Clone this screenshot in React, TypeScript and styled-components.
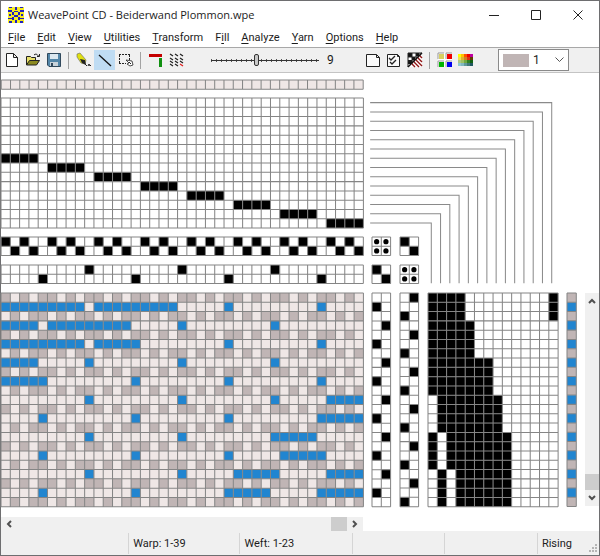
import React from "react";
import styled, { createGlobalStyle, css } from "styled-components";

const GlobalStyle = createGlobalStyle`
  * { box-sizing: border-box; }
  body { margin: 0; background: #fff; }
  button, select, input { font: inherit; color: inherit; margin: 0; padding: 0; border: 0; background: none; }
  svg { display: block; }
`;

const PALE = "#efe7e6";
const GREY = "#c0b5b5";
const BLUE = "#2185d0";

/* ---------- window frame ---------- */

const Window = styled.div`
  display: flex;
  flex-direction: column;
  min-height: 100vh;
  border: 1px solid #6e6e70;
  background: #fff;
  color: #1c1c1c;
  font-family: Roboto, "Open Sans", sans-serif;
  font-size: 11px;
`;

const TitleBar = styled.header`
  display: flex;
  align-items: center;
  height: 27px;
  padding-left: 7px;
`;

const Title = styled.h1`
  flex: 1;
  margin: 0 0 0 4px;
  font-family: "Open Sans", sans-serif;
  font-size: 11px;
  font-weight: 400;
  white-space: nowrap;
`;

const CaptionButton = styled.button`
  display: grid;
  place-items: center;
  width: 42px;
  height: 27px;
`;

const MenuBar = styled.nav`
  display: flex;
  align-items: center;
  gap: 12px;
  height: 19px;
  padding-left: 7px;
`;

const MenuButton = styled.button`
  line-height: 19px;
  white-space: nowrap;
  u { text-underline-offset: 2px; }
`;

/* ---------- toolbar ---------- */

const Toolbar = styled.div`
  display: flex;
  align-items: center;
  height: 26px;
  padding-right: 30px;
  background: #f0f0f0;
  border-top: 1px solid #a8a8a8;
  border-bottom: 1px solid #c4c4c4;
`;

const ToolButton = styled.button<{ $active?: boolean }>`
  display: grid;
  place-items: center;
  width: 21px;
  height: 20px;
  background: ${(p) => (p.$active ? "#bfdcf3" : "transparent")};
`;

const Divider = styled.span`
  width: 1px;
  height: 17px;
  margin: 0 4px;
  background: #a3a3a3;
`;

const Spacer = styled.span`
  flex: 1;
`;

const ZoomSlider = styled.input`
  appearance: none;
  width: 108px;
  height: 14px;
  margin-left: 24px;
  background:
    linear-gradient(#333, #333) center / 100% 1px no-repeat,
    repeating-linear-gradient(90deg, #555 0 1px, transparent 1px 5px) center / 100% 3px no-repeat;
  &::-webkit-slider-thumb {
    appearance: none;
    width: 5px;
    height: 12px;
    border: 1px solid #333;
    border-radius: 2px;
    background: #c8c8c8;
  }
`;

const ZoomValue = styled.output`
  width: 24px;
  margin-left: 8px;
  font-size: 12px;
`;

const YarnPicker = styled.label`
  display: flex;
  align-items: center;
  width: 71px;
  height: 22px;
  margin-left: 22px;
  padding: 0 4px;
  border: 1px solid #8a8a8a;
  background: #fff;
  font-size: 12px;
`;

const Swatch = styled.span`
  width: 26px;
  height: 13px;
  background: ${GREY};
`;

const YarnSelect = styled.select`
  flex: 1;
  min-width: 0;
  appearance: none;
  padding-left: 4px;
`;

/* ---------- draft ---------- */

const draftColumns = css`
  display: grid;
  grid-template-columns: 39fr 2fr 2fr 14fr 1fr;
  gap: 9px;
`;

const Workspace = styled.main`
  display: flex;
  gap: 9px;
  padding-top: 7px;
`;

const Draft = styled.div`
  ${draftColumns}
  flex: 1;
`;

const ScrollRow = styled.div`
  ${draftColumns}
  padding: 11px 23px 0 0;
`;

const Panel = styled.svg<{ $area: string }>`
  grid-area: ${(p) => p.$area};
  width: 100%;
  overflow: visible;
`;

const SideColumn = styled.div`
  display: flex;
  flex-direction: column;
  justify-content: flex-end;
  width: 14px;
`;

const ScrollTrack = styled.div<{ $vertical?: boolean }>`
  display: flex;
  flex-direction: ${(p) => (p.$vertical ? "column" : "row")};
  height: ${(p) => (p.$vertical ? "50%" : "14px")};
  background: #f0f0f0;
`;

const ScrollArrow = styled.button`
  display: grid;
  place-items: center;
  min-width: 14px;
  height: 16px;
`;

const HScrollArrow = styled(ScrollArrow)`
  width: 16px;
  height: 14px;
`;

const ScrollThumb = styled.div`
  width: 14px;
  height: 16px;
  background: #cdcdcd;
`;

const HScrollThumb = styled(ScrollThumb)`
  width: 16px;
  height: 14px;
`;

const StatusBar = styled.footer`
  flex: 1;
  display: grid;
  grid-template-columns: 127fr 111fr 112fr 92fr 93fr 62fr;
  min-height: 22px;
  padding: 2px 0 1px;
  background: #f0f0f0;
`;

const StatusCell = styled.span`
  display: flex;
  align-items: center;
  padding-left: 4px;
  white-space: nowrap;
  & + & { border-left: 1px solid #d5d5d5; }
`;

const ResizeGrip = styled.svg`
  align-self: flex-end;
  margin-left: auto;
`;

/* ---------- draft data ---------- */

type Paint = (row: number, col: number) => string | null;
type Span = [number, number];

const inSpans = (spans: Span[], n: number) => spans.some(([a, b]) => n >= a && n <= b);

const threading: Paint = (r, c) => (c % 5 < 4 && r === 6 + Math.floor(c / 5) ? "#000" : null);
const groundThreading: Paint = (r, c) => (c % 5 < 4 && c % 5 % 2 === r ? "#000" : null);
const tieThreading: Paint = (r, c) => (c % 10 === (r === 0 ? 9 : 4) ? "#000" : null);
const diagonal: Paint = (r, c) => (r === c ? "#000" : null);
const empty: Paint = () => null;
const tieTreadling: Paint = (r, c) => (r % 4 === (c === 0 ? 1 : 3) ? "#000" : null);
const groundTreadling: Paint = (r, c) => (r % 4 === (c === 0 ? 2 : 0) ? "#000" : null);

const treadlingSpans = (r: number): Span[] => {
  if (r < 3) return [[0, 3], [13, 13]];
  if (r < 7) return [[0, 4]];
  if (r < 11) return [[0, 6]];
  if (r < 15) return [[1, 7]];
  if (r < 19) return [[0, 0], [2, 8]];
  return [[1, 1], [3, 8]];
};
const treadling: Paint = (r, c) => (inSpans(treadlingSpans(r), c) ? "#000" : null);

const patternWeft: Record<number, Span[]> = {
  1: [[0, 8], [10, 18], [24, 24], [34, 34]],
  3: [[0, 3], [5, 13], [19, 19], [29, 29]],
  5: [[0, 8], [10, 14], [24, 24], [34, 34]],
  7: [[0, 3], [9, 9], [19, 19], [29, 29]],
  9: [[0, 4], [14, 14], [24, 24], [34, 34]],
  11: [[9, 9], [19, 19], [29, 29], [35, 38]],
  13: [[4, 4], [14, 14], [24, 24], [34, 38]],
  15: [[9, 9], [19, 19], [29, 33]],
  17: [[4, 4], [14, 14], [24, 24], [30, 34]],
  19: [[9, 9], [19, 19], [25, 29], [35, 38]],
  21: [[4, 4], [14, 14], [24, 28], [34, 38]],
};

const drawdown: Paint = (r, c) => {
  if (r % 2 === 1) return inSpans(patternWeft[r], c) ? BLUE : PALE;
  const raised = r % 4 === 0 ? [0, 2, 4] : [1, 3, 4];
  return raised.includes(c % 5) ? GREY : PALE;
};

interface GridProps {
  rows: number;
  cols: number;
  area: string;
  paint: Paint;
  label: string;
  dots?: boolean;
}

function WeaveGrid({ rows, cols, area, paint, label, dots }: GridProps) {
  const cells: React.ReactNode[] = [];
  for (let r = 0; r < rows; r++) {
    for (let c = 0; c < cols; c++) {
      const fill = paint(r, c);
      if (fill) cells.push(<rect key={`${r}-${c}`} x={c * 10} y={r * 10} width={10} height={10} fill={fill} />);
      if (dots) cells.push(<circle key={`d${r}-${c}`} cx={c * 10 + 5} cy={r * 10 + 5} r={2.8} />);
    }
  }
  let lines = "";
  for (let r = 0; r <= rows; r++) lines += `M0 ${r * 10}H${cols * 10}`;
  for (let c = 0; c <= cols; c++) lines += `M${c * 10} 0V${rows * 10}`;
  return (
    <Panel $area={area} viewBox={`0 0 ${cols * 10} ${rows * 10}`} role="img" aria-label={label}>
      {cells}
      <path d={lines} fill="none" stroke="#858585" strokeWidth={1.1} />
    </Panel>
  );
}

function HarnessLines() {
  const d = Array.from({ length: 14 }, (_, i) => `M-2 ${i * 10 + 5}H${194 - i * 10}V200`).join("");
  return (
    <Panel $area="2 / 2 / 5 / 5" viewBox="0 0 200 200" role="img" aria-label="Shaft to treadle lines">
      <path d={d} fill="none" stroke="#8a8a8a" strokeWidth={1.1} />
    </Panel>
  );
}

/* ---------- icons ---------- */

const Arrow = ({ d }: { d: string }) => (
  <svg width="10" height="10" viewBox="0 0 10 10" fill="none" stroke="#505050" strokeWidth="2">
    <path d={d} />
  </svg>
);

const AppIcon = () => (
  <svg width="16" height="16" viewBox="0 0 16 16" shapeRendering="crispEdges">
    <rect width="16" height="16" fill="#f4ec21" />
    <path
      d="M1 0h3v1h-3zM7 0h2v3h-2zM12 0h3v1h-3zM0 3h4v2h-4zM6 4h4v1h-4zM12 3h4v2h-4zM4 5h2v3h-2zM10 5h2v3h-2zM1 7h2v2h-2zM6 8h4v2h-4zM13 7h2v2h-2zM0 11h4v1h-4zM12 11h4v1h-4zM4 10h2v3h-2zM10 10h2v3h-2zM1 14h3v2h-3zM7 13h2v3h-2zM12 14h3v2h-3z"
      fill="#2020c0"
    />
  </svg>
);

const NewIcon = () => (
  <svg width="14" height="16" viewBox="0 0 14 16" fill="#fff" stroke="#222">
    <path d="M1.500 1.500H8.500L12.500 5.500V14.500H1.500ZM8.500 1.500V5.500H12.500" />
  </svg>
);

const OpenIcon = () => (
  <svg width="16" height="16" viewBox="0 0 16 16" stroke="#222" fill="none">
    <path d="M1.500 13V4.500H5.500L6.500 5.500H10.500V8" fill="#e8e06a" />
    <path d="M1.500 13L4.500 8.500H14.500L11.500 13Z" fill="#8b8a20" />
    <path d="M9 3C10.500 1.500 12 2 13.500 4M14.500 2V4.500H12" />
  </svg>
);

const SaveIcon = () => (
  <svg width="16" height="16" viewBox="0 0 16 16">
    <path d="M1.500 1.500H14.500V14.500H3L1.500 13Z" fill="#5386a8" stroke="#31495c" />
    <path d="M4 2H12V7H4Z" fill="#dce8ef" />
    <path d="M4 10H12V14H4Z" fill="#c9d3da" />
    <path d="M5 11H7V14H5Z" fill="#31495c" />
  </svg>
);

const PenIcon = () => (
  <svg width="17" height="16" viewBox="0 0 17 16">
    <path d="M2 2L5 1L11 8L10 12L6 11L2 5Z" fill="#e0e010" stroke="#666" strokeWidth=".6" />
    <path d="M5 7L10 8L11 13L7 11Z" fill="#222" />
    <path d="M9 11L12 14M13 14L14 12L15 14L16 13" stroke="#222" fill="none" />
  </svg>
);

const LineIcon = () => (
  <svg width="16" height="16" viewBox="0 0 16 16">
    <path d="M2 3L14 14" stroke="#111" strokeWidth="1.300" />
  </svg>
);

const SelectIcon = () => (
  <svg width="16" height="16" viewBox="0 0 16 16" fill="none" stroke="#222">
    <path d="M1 2.500H12M1 11.500H8M1.500 3V11M11.500 3V8" strokeDasharray="2 1" />
    <path d="M8 8L14 9L15 13L12 14L9 12L11 11Z" fill="#fff" strokeWidth=".8" />
    <path d="M11 10L13 12" />
  </svg>
);

const TieIcon = () => (
  <svg width="16" height="16" viewBox="0 0 16 16">
    <path d="M1 2H14V5H1Z" fill="#c40000" />
    <path d="M11 6H14V15H11Z" fill="#109010" />
  </svg>
);

const TwillIcon = () => (
  <svg width="16" height="16" viewBox="0 0 16 16" fill="none" strokeWidth="1.300">
    <path
      d="M1 2L4 4M6 2L9 4M11 2L14 4M1 6L4 8M6 6L9 8M11 6L14 8M1 9L4 11M6 9L9 11M11 9L14 11M1 12L4 14M6 12L9 14"
      stroke="#222"
    />
    <path d="M11 12L14 14" stroke="#e02020" />
  </svg>
);

const PageIcon = () => (
  <svg width="16" height="16" viewBox="0 0 16 16" fill="#fafafa" stroke="#222">
    <path d="M1.500 2.500H11.500L14.500 5.500V14.500H1.500ZM11.500 2.500V5.500H14.500" />
  </svg>
);

const CheckIcon = () => (
  <svg width="16" height="16" viewBox="0 0 16 16" fill="#fafafa" stroke="#222">
    <path d="M1.500 2.500H11.500L13.500 4.500V14.500H1.500ZM11.500 2.500V4.500H13.500" />
    <path d="M3 6L5 8L9 4M4 10L6 12L10 8" fill="none" strokeWidth="1.300" />
  </svg>
);

const HatchIcon = () => (
  <svg width="16" height="16" viewBox="0 0 16 16">
    <path d="M1 1H15V15H1Z" fill="#fff" />
    <path d="M1 1H5V5H1ZM5 5H8V8H5ZM9 1H12V4H9ZM1 8H5V12H1Z" fill="#111" />
    <path d="M1 1H15M1 5H12M1 9H8M1 1V15M5 1V12M9 1V8M13 1V4" stroke="#222" fill="none" />
    <path d="M1 15L15 1" stroke="#111" strokeWidth="1.500" />
    <path d="M5 12L8 15M7 10L12 15M9 8L15 14M11 6L15 10M13 4L15 6" stroke="#8f1414" strokeWidth="1.400" />
  </svg>
);

const ColorsIcon = () => (
  <svg width="16" height="16" viewBox="0 0 16 16">
    <path d="M1 1H15V15H1Z" fill="#fff" />
    <path d="M1 7V1H7M9 7V1H15M1 15V9H7M9 15V9H15" fill="none" stroke="#999" />
    <path d="M2 2H7V7H2Z" fill="#d8d060" />
    <path d="M10 2H15V7H10Z" fill="#f00000" />
    <path d="M2 10H7V15H2Z" fill="#00b400" />
    <path d="M10 10H15V15H10Z" fill="#0000f0" />
  </svg>
);

const PALETTE = [
  ["#ffff00", "#ffc000", "#ff5000", "#f00000", "#c000a0"],
  ["#f0e050", "#e0b030", "#d08020", "#e03010", "#604000"],
  ["#b0c880", "#a0c060", "#70a840", "#308020", "#106010"],
  ["#90c8d0", "#80b8c0", "#609898", "#407878", "#205860"],
];

const PaletteIcon = () => (
  <svg width="16" height="16" viewBox="0 0 16 16" shapeRendering="crispEdges">
    {PALETTE.flatMap((row, r) =>
      row.map((fill, c) => <rect key={`${r}-${c}`} x={c * 3} y={2 + r * 3} width={3} height={3} fill={fill} />)
    )}
  </svg>
);

const MENUS = [
  ["", "F", "ile"],
  ["", "E", "dit"],
  ["", "V", "iew"],
  ["", "U", "tilities"],
  ["", "T", "ransform"],
  ["F", "i", "ll"],
  ["", "A", "nalyze"],
  ["", "Y", "arn"],
  ["", "O", "ptions"],
  ["", "H", "elp"],
];

export default function App() {
  const [zoom, setZoom] = React.useState(9);
  return (
    <>
      <GlobalStyle />
      <Window>
        <TitleBar>
          <AppIcon />
          <Title>WeavePoint CD - Beiderwand Plommon.wpe</Title>
          <CaptionButton aria-label="Minimize">
            <svg width="10" height="10" stroke="#222"><path d="M0 5.500H10" /></svg>
          </CaptionButton>
          <CaptionButton aria-label="Maximize">
            <svg width="10" height="10" stroke="#222" fill="none"><path d="M.5 .5H9.500V9.500H.5Z" /></svg>
          </CaptionButton>
          <CaptionButton aria-label="Close">
            <svg width="10" height="10" stroke="#222"><path d="M.5 .5L9.500 9.500M9.500 .5L.5 9.500" /></svg>
          </CaptionButton>
        </TitleBar>

        <MenuBar>
          {MENUS.map(([before, key, after]) => (
            <MenuButton key={before + key + after}>{before}<u>{key}</u>{after}</MenuButton>
          ))}
        </MenuBar>

        <Toolbar>
          <ToolButton aria-label="New"><NewIcon /></ToolButton>
          <ToolButton aria-label="Open"><OpenIcon /></ToolButton>
          <ToolButton aria-label="Save"><SaveIcon /></ToolButton>
          <Divider />
          <ToolButton aria-label="Pen"><PenIcon /></ToolButton>
          <ToolButton aria-label="Line" $active><LineIcon /></ToolButton>
          <ToolButton aria-label="Select"><SelectIcon /></ToolButton>
          <Divider />
          <ToolButton aria-label="Threading and treadling"><TieIcon /></ToolButton>
          <ToolButton aria-label="Twill"><TwillIcon /></ToolButton>
          <ZoomSlider
            type="range"
            min={1}
            max={20}
            value={zoom}
            aria-label="Zoom"
            onChange={(e) => setZoom(Number(e.target.value))}
          />
          <ZoomValue>{zoom}</ZoomValue>
          <Spacer />
          <ToolButton aria-label="Blank"><PageIcon /></ToolButton>
          <ToolButton aria-label="Check"><CheckIcon /></ToolButton>
          <ToolButton aria-label="Structure"><HatchIcon /></ToolButton>
          <Divider />
          <ToolButton aria-label="Colors"><ColorsIcon /></ToolButton>
          <ToolButton aria-label="Palette"><PaletteIcon /></ToolButton>
          <YarnPicker>
            <Swatch />
            <YarnSelect aria-label="Yarn" defaultValue="1">
              <option>1</option>
              <option>2</option>
              <option>3</option>
            </YarnSelect>
            <svg width="9" height="6" fill="none" stroke="#555"><path d="M.5 .5L4.500 4.500L8.500 .5" /></svg>
          </YarnPicker>
        </Toolbar>

        <Workspace>
          <Draft>
            <WeaveGrid area="1 / 1" rows={1} cols={39} paint={() => PALE} label="Warp colors" />
            <WeaveGrid area="2 / 1" rows={14} cols={39} paint={threading} label="Threading" />
            <HarnessLines />
            <WeaveGrid area="3 / 1" rows={2} cols={39} paint={groundThreading} label="Ground threading" />
            <WeaveGrid area="3 / 2" rows={2} cols={2} paint={empty} dots label="Tie-up" />
            <WeaveGrid area="3 / 3" rows={2} cols={2} paint={diagonal} label="Tie-up" />
            <WeaveGrid area="4 / 1" rows={2} cols={39} paint={tieThreading} label="Tie threading" />
            <WeaveGrid area="4 / 2" rows={2} cols={2} paint={diagonal} label="Tie-up" />
            <WeaveGrid area="4 / 3" rows={2} cols={2} paint={empty} dots label="Tie-up" />
            <WeaveGrid area="5 / 1" rows={23} cols={39} paint={drawdown} label="Drawdown" />
            <WeaveGrid area="5 / 2" rows={23} cols={2} paint={tieTreadling} label="Tie treadling" />
            <WeaveGrid area="5 / 3" rows={23} cols={2} paint={groundTreadling} label="Ground treadling" />
            <WeaveGrid area="5 / 4" rows={23} cols={14} paint={treadling} label="Treadling" />
            <WeaveGrid area="5 / 5" rows={23} cols={1} paint={(r) => (r % 2 ? BLUE : GREY)} label="Weft colors" />
          </Draft>
          <SideColumn>
            <ScrollTrack $vertical>
              <ScrollArrow aria-label="Scroll up"><Arrow d="M2 7L5 4L8 7" /></ScrollArrow>
              <Spacer />
              <ScrollThumb />
              <ScrollArrow aria-label="Scroll down"><Arrow d="M2 3L5 6L8 3" /></ScrollArrow>
            </ScrollTrack>
          </SideColumn>
        </Workspace>

        <ScrollRow>
          <ScrollTrack>
            <HScrollArrow aria-label="Scroll left"><Arrow d="M7 2L4 5L7 8" /></HScrollArrow>
            <Spacer />
            <HScrollThumb />
            <HScrollArrow aria-label="Scroll right"><Arrow d="M3 2L6 5L3 8" /></HScrollArrow>
          </ScrollTrack>
        </ScrollRow>

        <StatusBar>
          <StatusCell />
          <StatusCell>Warp: 1-39</StatusCell>
          <StatusCell>Weft: 1-23</StatusCell>
          <StatusCell />
          <StatusCell />
          <StatusCell>
            Rising
            <ResizeGrip width="10" height="10" fill="#b5b5b5">
              <path d="M6 0h2v2h-2zM3 3h2v2h-2zM6 3h2v2h-2zM0 6h2v2h-2zM3 6h2v2h-2zM6 6h2v2h-2z" />
            </ResizeGrip>
          </StatusCell>
        </StatusBar>
      </Window>
    </>
  );
}
